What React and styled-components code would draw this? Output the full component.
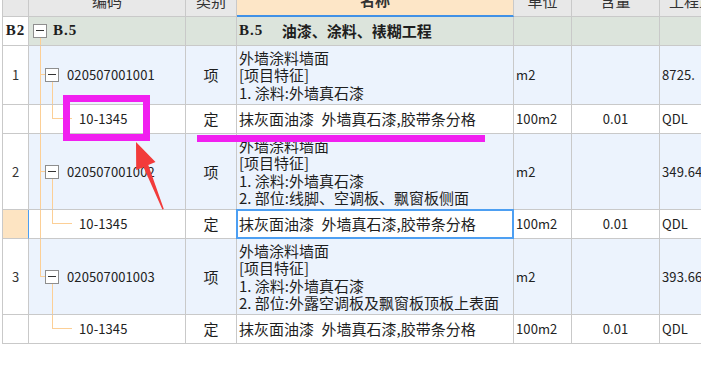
import React from 'react'
import styled, { createGlobalStyle, css } from 'styled-components'

const GlobalStyle = createGlobalStyle`
  html, body {
    margin: 0;
    padding: 0;
    background: #fff;
    overflow: hidden;
  }
  body {
    font-family: "Noto Sans CJK SC", "Noto Sans", sans-serif;
    color: #1e1e1e;
  }
`

const COLS = '26px 157px 51px 277px 58px 88px 64px'
const LINE = '#c9c9c9'
const TREE = '#fccf96'

const bgs = {
    white: '#ffffff',
    head: '#e8e8e8',
    title: '#fde6c7',
    group: '#dce4dc',
    item: '#ecf3fd',
    mark: '#fde4c2'
}

const Page = styled.div`
    position: relative;
    width: 701px;
    height: 371px;
    overflow: hidden;
`

const Table = styled.div`
    margin-left: 2px;
    width: 721px;
    border-left: 1px solid ${LINE};
`

const Row = styled.div`
    display: grid;
    grid-template-columns: ${COLS};
    height: ${p => p.$h}px;
`

const Cell = styled.div`
    position: relative;
    display: flex;
    align-items: center;
    justify-content: ${p => (p.$center ? 'center' : 'flex-start')};
    padding: 0 ${p => p.$pad ?? 2}px;
    border-right: 1px solid ${p => p.$edge || LINE};
    border-bottom: 1px solid ${LINE};
    background: ${p => bgs[p.$bg || 'white']};
    font-size: 15px;
    line-height: 17.5px;
    white-space: pre-line;
    overflow: hidden;
    box-sizing: border-box;
    ${p => p.$selected && css`
        overflow: visible;
        &::after {
            content: '';
            position: absolute;
            top: -1px;
            left: -1px;
            right: -1px;
            bottom: -1px;
            border: 2px solid #4d9ff2;
            pointer-events: none;
        }
    `}
`

const HeadCell = styled(Cell)`
    align-items: flex-end;
    justify-content: center;
    padding-bottom: 8px;
    line-height: 15px;
    color: #333;
    font-weight: ${p => (p.$strong ? 700 : 400)};
    ${p => p.$strong && css`
        border-bottom: 2px solid #4191e6;
    `}
`

const Code = styled.span`
    font-size: 13px;
    letter-spacing: 0.1px;
    color: #222;
`

const Num = styled.span`
    font-size: 13px;
    color: #333;
`

const SerifBold = styled.span`
    font-family: "Liberation Serif", "Noto Sans CJK SC", serif;
    font-weight: 700;
    font-size: 15px;
    letter-spacing: 1px;
`

const GroupTitle = styled.span`
    font-weight: 700;
    font-size: 15px;
    white-space: pre;
`

const Toggle = styled.span`
    position: relative;
    flex: none;
    width: 14px;
    height: 14px;
    box-sizing: border-box;
    border: 1px solid #8e8e8e;
    background: #fff;
    margin-right: ${p => p.$gap}px;
    z-index: 1;
    &::after {
        content: '';
        position: absolute;
        left: 2px;
        right: 2px;
        top: 5px;
        height: 1px;
        background: #333;
    }
`

/* tree connectors inside the code cell */
const VLine = styled.span`
    position: absolute;
    left: ${p => p.$x}px;
    width: 1px;
    background: ${TREE};
    top: ${p => (p.$from === 'mid' ? 'calc(50% - 1px)' : p.$from === 'box' ? 'calc(50% + 6px)' : '0')};
    bottom: ${p => (p.$to === 'mid' ? 'calc(50% + 1px)' : '0')};
`

const HLine = styled.span`
    position: absolute;
    left: ${p => p.$x}px;
    width: ${p => p.$w}px;
    height: 1px;
    top: calc(50% - 1px);
    background: ${TREE};
`

/* annotations drawn over the grid */
const Frame = styled.div`
    position: absolute;
    left: 63px;
    top: 95px;
    width: 87px;
    height: 46px;
    box-sizing: border-box;
    border: 7px solid #f11ff0;
`

const Underline = styled.div`
    position: absolute;
    left: 197px;
    top: 135px;
    width: 288px;
    height: 7px;
    background: #f11ff0;
`

const ArrowSvg = styled.svg`
    position: absolute;
    left: 0;
    top: 0;
    pointer-events: none;
`

const DESC = '抹灰面油漆\u2002外墙真石漆,胶带条分格'

const groups = [
    {
        no: '1',
        code: '020507001001',
        name: '外墙涂料墙面\n[项目特征]\n1. 涂料:外墙真石漆',
        qty: '8725.',
        h: 59
    },
    {
        no: '2',
        code: '020507001002',
        name: '外墙涂料墙面\n[项目特征]\n1. 涂料:外墙真石漆\n2. 部位:线脚、空调板、飘窗板侧面',
        qty: '349.64',
        h: 76,
        selected: true
    },
    {
        no: '3',
        code: '020507001003',
        name: '外墙涂料墙面\n[项目特征]\n1. 涂料:外墙真石漆\n2. 部位:外露空调板及飘窗板顶板上表面',
        qty: '393.66',
        h: 76,
        last: true
    }
]

function Header() {
    return (
        <Row $h={17}>
            <HeadCell $bg="head" />
            <HeadCell $bg="head">编码</HeadCell>
            <HeadCell $bg="head">类别</HeadCell>
            <HeadCell $bg="title" $strong>名称</HeadCell>
            <HeadCell $bg="head">单位</HeadCell>
            <HeadCell $bg="head">含量</HeadCell>
            <HeadCell $bg="head">工程量</HeadCell>
        </Row>
    )
}

function GroupRow() {
    return (
        <Row $h={29}>
            <Cell $center $pad={0}><SerifBold>B2</SerifBold></Cell>
            <Cell $bg="group" $pad={4}>
                <Toggle $gap={6} />
                <SerifBold>B.5</SerifBold>
                <VLine $x={11} $from="box" />
            </Cell>
            <Cell $bg="group" />
            <Cell $bg="group">
                <SerifBold>B.5</SerifBold>
                <GroupTitle>{'\u3000 油漆、涂料、裱糊工程'}</GroupTitle>
            </Cell>
            <Cell $bg="group" />
            <Cell $bg="group" />
            <Cell $bg="group" />
        </Row>
    )
}

function ItemRow({ item }) {
    return (
        <Row $h={item.h}>
            <Cell $center $pad={0}><Num>{item.no}</Num></Cell>
            <Cell $bg="item" $pad={16}>
                <VLine $x={11} $to={item.last ? 'mid' : undefined} />
                <HLine $x={11} $w={5} />
                <VLine $x={23} $from="box" />
                <Toggle $gap={8} />
                <Code>{item.code}</Code>
            </Cell>
            <Cell $bg="item" $center>项</Cell>
            <Cell $bg="item">{item.name}</Cell>
            <Cell $bg="item"><Code>m2</Code></Cell>
            <Cell $bg="item" />
            <Cell $bg="item"><Code>{item.qty}</Code></Cell>
        </Row>
    )
}

function SubRow({ item }) {
    return (
        <Row $h={29}>
            <Cell $bg={item.selected ? 'mark' : 'white'} $edge={item.selected ? '#4d9ff2' : undefined} />
            <Cell $pad={50}>
                {!item.last && <VLine $x={11} />}
                <VLine $x={23} $to="mid" />
                <HLine $x={23} $w={20} />
                <Code>10-1345</Code>
            </Cell>
            <Cell $center>定</Cell>
            <Cell $selected={item.selected}>{DESC}</Cell>
            <Cell><Code>100m2</Code></Cell>
            <Cell $center><Code>0.01</Code></Cell>
            <Cell><Code>QDL</Code></Cell>
        </Row>
    )
}

function Arrow() {
    return (
        <ArrowSvg width="701" height="371" viewBox="0 0 701 371">
            <polygon
                points="136,142 155.5,162 148.3,165 163.8,209 162.4,209.4 143.6,167.2 136.2,170"
                fill="#f23b3b"
            />
        </ArrowSvg>
    )
}

export default function App() {
    return (
        <Page>
            <GlobalStyle />
            <Table>
                <Header />
                <GroupRow />
                {groups.map(item => (
                    <React.Fragment key={item.no}>
                        <ItemRow item={item} />
                        <SubRow item={item} />
                    </React.Fragment>
                ))}
            </Table>
            <Frame />
            <Underline />
            <Arrow />
        </Page>
    )
}
